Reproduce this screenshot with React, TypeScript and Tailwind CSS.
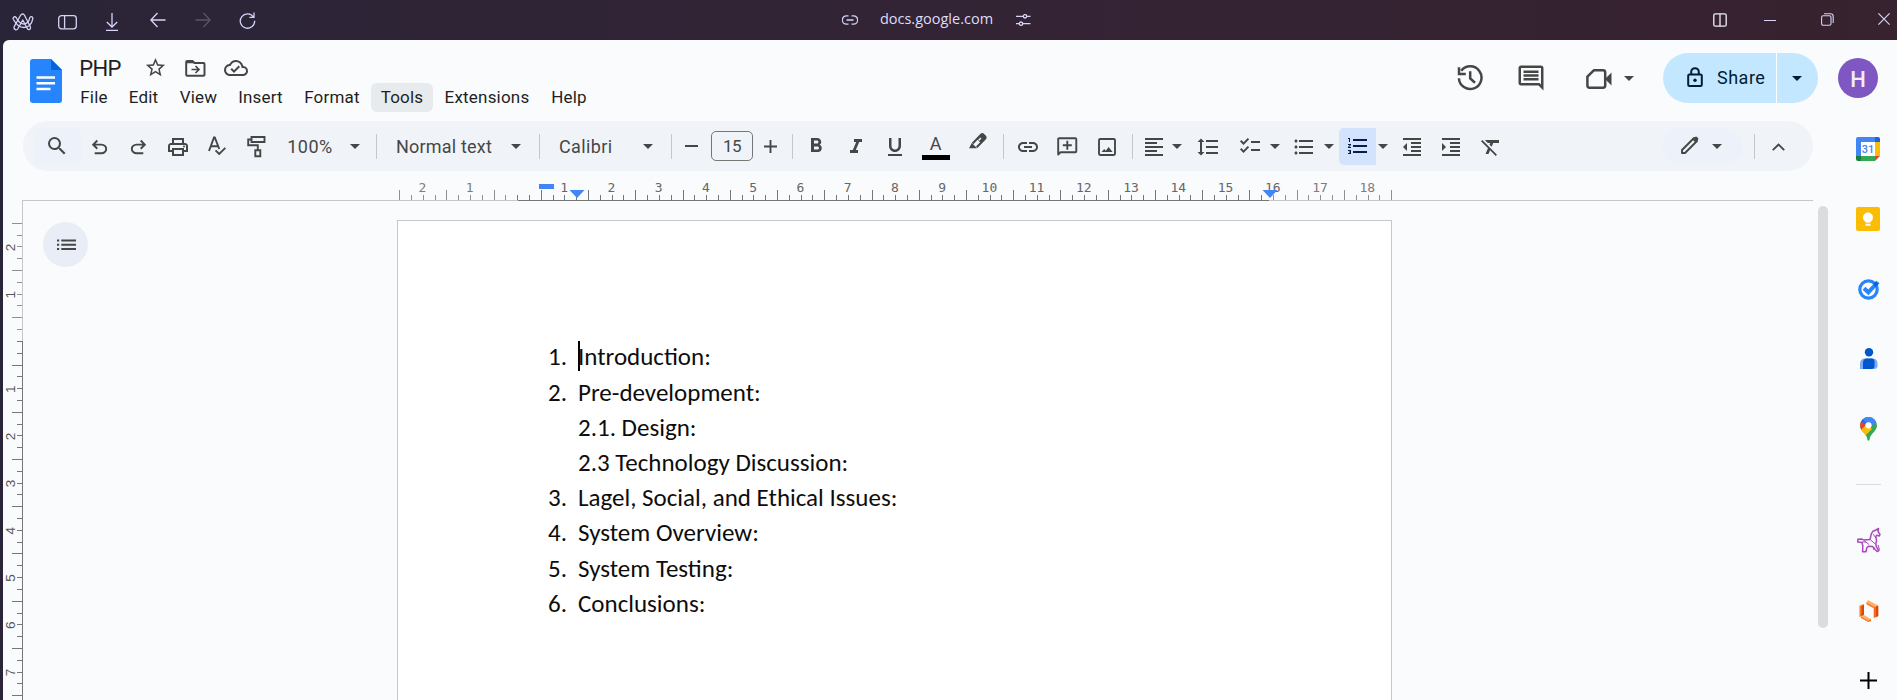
import type { ReactNode } from "react";
import {
  MdArrowDropDown,
  MdChecklist,
  MdFormatAlignLeft,
  MdFormatBold,
  MdFormatClear,
  MdFormatIndentDecrease,
  MdFormatIndentIncrease,
  MdFormatItalic,
  MdFormatLineSpacing,
  MdFormatListBulleted,
  MdFormatListNumbered,
  MdFormatUnderlined,
  MdLink,
  MdOutlineCloudDone,
  MdOutlineComment,
  MdOutlinePrint,
  MdSearch,
  MdStarBorder,
} from "react-icons/md";

function Slot({ className, children }: { className: string; children?: ReactNode }) {
  return <div className={`flex shrink-0 items-center justify-center [&>svg]:shrink-0 ${className}`}>{children}</div>;
}

const Caret = ({ className }: { className: string }) => (
  <Slot className={className}>
    <MdArrowDropDown size={24} />
  </Slot>
);

const Divider = ({ className }: { className: string }) => (
  <Slot className={className}>
    <div className="h-[25px] w-px bg-[#c7c7c7]" />
  </Slot>
);

/* ---------- browser chrome ---------- */

function TitleBar() {
  return (
    <div className="flex h-10 shrink-0 items-center bg-linear-to-r from-[#2a2438] via-[#332435] to-[#37222f] text-[#d6d3f5]">
      <Slot className="ml-[3px] w-10 pt-[3px]">
        <svg width="22" height="18" viewBox="0 0 22 18" fill="none" stroke="currentColor" strokeWidth="1.3" strokeLinejoin="round" strokeLinecap="round">
          <path d="M2.2 13.6 8.6 2.2Q9.3 1 10.6 1t1.9 1.2l5.8 11.600q.6 1.400-.4 2.400-1.500 1-2.500-.5L10.800 7 5.700 16q-.9 1.300-2.300.6-1.900-1-1.200-3Z" />
          <path d="M1.300 6.200q-.7-1.800 1-2.400 1.300-.3 2 1Q7.200 11 12 11q4.600-.6 5.700-6.200.5-1.400 1.900-1.200 1.500.5 1.200 2.200-1.600 8-8.800 8.700Q5.500 14.300 1.300 6.200Z" />
        </svg>
      </Slot>
      <Slot className="w-[49px] pt-1">
        <svg width="19" height="15" viewBox="0 0 19 15" fill="none" stroke="currentColor" strokeWidth="1.3">
          <rect x=".7" y=".7" width="17.600" height="13.100" rx="2.800" />
          <path d="M6.600 1v12.500" />
        </svg>
      </Slot>
      <Slot className="w-10 pt-1">
        <svg width="14" height="18" viewBox="0 0 14 18" fill="none" stroke="currentColor" strokeWidth="1.3">
          <path d="M7 0v13.800M1.800 9 7 14l5.200-5M1 17.400h12" />
        </svg>
      </Slot>
      <Slot className="w-[51px]">
        <svg width="16" height="16" viewBox="0 0 16 16" fill="none" stroke="currentColor" strokeWidth="1.3">
          <path d="M15.500 8H1M7.500 1 .9 8l6.600 7" />
        </svg>
      </Slot>
      <Slot className="w-[39px] text-[#5b5468]">
        <svg width="16" height="16" viewBox="0 0 16 16" fill="none" stroke="currentColor" strokeWidth="1.3">
          <path d="M.5 8H15M8.500 1l6.600 7-6.600 7" />
        </svg>
      </Slot>
      <Slot className="w-[51px] pt-px">
        <svg width="17" height="17" viewBox="0 0 17 17" fill="none" stroke="currentColor" strokeWidth="1.3">
          <path d="M14.600 5.200A7.200 7.200 0 1 0 15.700 8.800M15 .6v4.800h-4.600" />
        </svg>
      </Slot>
      <Slot className="ml-[559px] w-[35px]">
        <svg width="16" height="10" viewBox="0 0 16 10" fill="none" stroke="currentColor" strokeWidth="1.3">
          <path d="M6.500.8h-2a4.200 4.200 0 0 0 0 8.400h2M9.500.8h2a4.200 4.200 0 0 1 0 8.400h-2M4.500 5h7" />
        </svg>
      </Slot>
      <Slot className="w-[138px] pb-0.5 pl-px font-['Open_Sans',sans-serif] text-[14.500px] whitespace-nowrap text-[#dedcf8]">docs.google.com</Slot>
      <Slot className="w-9">
        <svg width="15" height="12" viewBox="0 0 15 12" fill="none" stroke="currentColor" strokeWidth="1.3">
          <path d="M0 2.300h7M11 2.300h3.500M0 9.700h3M7 9.700h7.500" />
          <circle cx="9" cy="2.300" r="1.700" />
          <circle cx="5" cy="9.700" r="1.700" />
        </svg>
      </Slot>
      <Slot className="ml-[659px] w-10 text-[#f2f0fa]">
        <svg width="14" height="14" viewBox="0 0 14 14" fill="none" stroke="currentColor" strokeWidth="1.3">
          <rect x=".8" y=".8" width="12.400" height="12.400" rx="1.500" />
          <path d="M7 1v12" />
        </svg>
      </Slot>
      <Slot className="w-[60px]">
        <div className="h-px w-3 bg-[#d6d3f5]" />
      </Slot>
      <Slot className="w-[54px] pb-0.5">
        <svg width="13" height="13" viewBox="0 0 13 13" fill="none" stroke="currentColor" strokeWidth="1.1">
          <rect x=".6" y="2.800" width="9.400" height="9.400" rx="1.500" />
          <path d="M3 .7h6.500q2.700 0 2.700 2.700V10" />
        </svg>
      </Slot>
      <Slot className="w-[43px] pb-0.5 pl-[17px]">
        <svg width="12" height="12" viewBox="0 0 12 12" fill="none" stroke="currentColor" strokeWidth="1.2">
          <path d="m.4.4 11.200 11.200M11.600.4.4 11.600" />
        </svg>
      </Slot>
    </div>
  );
}

/* ---------- document header ---------- */

const menuItems = [
  { label: "File", className: "w-12" },
  { label: "Edit", className: "w-[51px]" },
  { label: "View", className: "w-[59px]" },
  { label: "Insert", className: "w-[65px]" },
  { label: "Format", className: "w-[78px]" },
  { label: "Tools", className: "w-[62px] rounded-md bg-[#e7ebee]" },
  { label: "Extensions", className: "w-[108px]" },
  { label: "Help", className: "w-14" },
];

function Header() {
  return (
    <div className="flex h-[81px] shrink-0 text-[#444746]">
      <div className="w-[67px] shrink-0 pt-[19px] pl-[27px]">
        <svg width="32" height="44" viewBox="0 0 32 44">
          <path d="M3 0h18l11 11v30a3 3 0 0 1-3 3H3a3 3 0 0 1-3-3V3a3 3 0 0 1 3-3Z" fill="#2684fc" />
          <path d="M21 0l11 11H21Z" fill="#0066da" />
          <path d="M6.500 18.500h18.500M6.500 24.300h18.500M6.500 30h14" stroke="#fff" strokeWidth="2.400" />
        </svg>
      </div>
      <div className="flex w-[560px] shrink-0 flex-col">
        <div className="flex h-[43px] items-center pt-[14px]">
          <Slot className="w-[60px] font-['Roboto',sans-serif] text-[22px] tracking-[-0.600px] text-[#1f1f1f]">PHP</Slot>
          <Slot className="w-[50px] pb-[2px]"><MdStarBorder size={23} /></Slot>
          <Slot className="w-[31px] pb-px">
            <svg width="21" height="17" viewBox="0 0 21 17">
              <path d="M1.200 3V2q0-1 1-1h5.300l2 2h9q1 0 1 1v10.800q0 1-1 1H2.200q-1 0-1-1Z" fill="none" stroke="currentColor" strokeWidth="2" />
              <path d="M1 1h6.700l2 2.200H1Z" fill="currentColor" />
              <path d="M6.500 9.500h7M10.500 6l3.500 3.500-3.500 3.500" fill="none" stroke="currentColor" strokeWidth="1.700" />
            </svg>
          </Slot>
          <Slot className="w-[50px] pb-px"><MdOutlineCloudDone size={24} /></Slot>
        </div>
        <div className="flex font-['Roboto',sans-serif] text-[17px] text-[#1f1f1f]">
          {menuItems.map((m) => (
            <Slot key={m.label} className={`h-[29px] tracking-[0.200px] ${m.className}`}>{m.label}</Slot>
          ))}
        </div>
      </div>
      <div className="ml-auto flex h-[76px] items-center">
        <Slot className="w-6">
          <svg width="26" height="26" viewBox="0 0 26 26" fill="none" stroke="currentColor" strokeWidth="2.500">
            <path d="M1.900 13.200a11.300 11.300 0 1 0 2.300-7.400" />
            <path d="M2 2.200v6.700h6.800M13.200 6.200v7.200l4.800 4.300" />
          </svg>
        </Slot>
        <Slot className="w-[98px]"><MdOutlineComment size={30} /></Slot>
        <Slot className="w-[37px] pt-px">
          <svg width="26" height="22" viewBox="0 0 26 22">
            <path d="M7.800 2.300H17q2.200 0 2.200 2.200v13q0 2.200-2.200 2.200H3.600q-2.200 0-2.200-2.200V8.700Z" fill="none" stroke="currentColor" strokeWidth="2.500" strokeLinejoin="round" />
            <path d="m19 11 6.500-6.500v13Z" fill="currentColor" />
          </svg>
        </Slot>
        <Caret className="w-6" />
        <div className="ml-[22px] flex h-[50px] w-[155px] items-center rounded-full bg-[#c2e7ff] text-[#001d35]">
          <div className="flex h-full w-[113px] items-center pb-[2px] pl-6">
            <svg width="16" height="20" viewBox="0 0 16 20" fill="none" stroke="currentColor" strokeWidth="2">
              <rect x="1.200" y="7.500" width="13.600" height="11.400" rx="1.200" />
              <path d="M4.200 7.300V5a3.800 3.800 0 0 1 7.600 0v2.300" />
              <circle cx="8" cy="13.200" r="1.700" fill="currentColor" stroke="none" />
            </svg>
            <span className="pl-[14px] font-['Roboto',sans-serif] text-[18px] tracking-[0.500px]">Share</span>
          </div>
          <div className="h-full w-px bg-white" />
          <Caret className="w-10" />
        </div>
        <div className="mr-[19px] ml-5 flex size-10 items-center justify-center rounded-full bg-[#7e57c2] pt-[2px] font-['Roboto',sans-serif] text-[22px] font-medium text-white/90">H</div>
      </div>
    </div>
  );
}

/* ---------- toolbar ---------- */

const Undo = ({ className }: { className?: string }) => (
  <svg className={className} width="23" height="23" viewBox="0 -960 960 960" fill="currentColor">
    <path d="M280-200v-80h284q63 0 109.500-40T720-420q0-60-46.500-100T564-560H312l104 104-56 56-200-200 200-200 56 56-104 104h252q97 0 169.500 63T800-420q0 94-72.500 157T564-200H280Z" />
  </svg>
);

function Toolbar() {
  return (
    <div className="ml-5 flex h-[50px] w-[1790px] shrink-0 items-center rounded-full bg-[#f0f4f9] font-['Roboto',sans-serif] text-[18px] text-[#444746]">
      <Slot className="ml-3 h-[35px] w-[46px] bg-[#edf1fa] pr-[3px]"><MdSearch size={24} /></Slot>
      <Slot className="w-[38px] pt-[3px] pr-[2px]"><Undo /></Slot>
      <Slot className="w-[38px] pt-[3px]"><Undo className="-scale-x-100" /></Slot>
      <Slot className="w-[42px] pt-px"><MdOutlinePrint size={24} /></Slot>
      <Slot className="w-9">
        <svg width="18" height="20" viewBox="0 0 18 20" fill="none" stroke="currentColor" strokeWidth="1.900">
          <path d="M1 15 6 1.500h.8L11.300 13M2.800 10.300h7.400M7.500 14.300l3.700 3.700 6.200-6.200" />
        </svg>
      </Slot>
      <Slot className="w-[42px] pt-px">
        <svg width="19" height="22" viewBox="0 0 19 22" fill="none" stroke="currentColor" strokeWidth="1.900">
          <path d="M4.500 1h13v5h-13ZM4.500 3.500H1.200v5.700h9.600V14M8.300 14.200h5v6h-5Z" />
        </svg>
      </Slot>
      <Slot className="w-[66px] pt-px tracking-[0.500px]">100%</Slot>
      <Caret className="w-6" />
      <Divider className="w-[18px]" />
      <Slot className="w-[122px] !justify-start pl-[11px] tracking-[0.200px]">Normal text</Slot>
      <Caret className="w-[18px]" />
      <Divider className="w-7" />
      <Slot className="w-[82px] !justify-start pl-[6px] tracking-[0.400px]">Calibri</Slot>
      <Caret className="w-[26px]" />
      <Divider className="w-5" />
      <Slot className="w-5"><div className="h-[2px] w-[13px] bg-[#444746]" /></Slot>
      <Slot className="ml-[10px] h-[30px] w-[42px] rounded-[5px] border border-[#747775] pt-px text-[17px] tracking-[-0.500px]">15</Slot>
      <Slot className="w-[35px]">
        <svg width="13" height="13" viewBox="0 0 13 13" stroke="currentColor" strokeWidth="1.900"><path d="M6.500 0v13M0 6.500h13" /></svg>
      </Slot>
      <Divider className="w-2" />
      <Slot className="w-10"><MdFormatBold size={24} /></Slot>
      <Slot className="w-10 pt-px"><MdFormatItalic size={24} /></Slot>
      <Slot className="w-[39px] pt-px pr-px"><MdFormatUnderlined size={24} /></Slot>
      <Slot className="h-[38px] w-[41px] flex-col pb-px">
        <span className="h-[23px] text-[18px] leading-[23px]">A</span>
        <div className="h-[5px] w-7 bg-black" />
      </Slot>
      <Slot className="w-11 pb-[10px]">
        <svg width="18" height="17" viewBox="0 0 18 17">
          <path d="M3.600 10.500 12 1.700q1.300-1.200 2.500 0l1.500 1.500q1.200 1.200 0 2.500L7.700 14.200" fill="none" stroke="currentColor" strokeWidth="2" />
          <path d="M7.500 5.500 12 1.300q1.500-1 2.800.2l1.500 1.400q1.200 1.400 0 2.800l-4.300 4.500ZM2.800 10l5.300 5.200H0Z" fill="currentColor" />
          <path d="m9.700 7.300 2.200-2.200" stroke="#f0f4f9" strokeWidth="1.500" />
        </svg>
      </Slot>
      <Divider className="w-[7px]" />
      <Slot className="w-[41px] pt-px"><MdLink size={24} /></Slot>
      <Slot className="w-[38px] pt-px">
        <svg width="21" height="20" viewBox="0 0 21 20" fill="none" stroke="currentColor" strokeWidth="1.900">
          <path d="M1.200 17.500V2.200q0-1 1-1h16.100q1 0 1 1v12.100q0 1-1 1H3.500Z" strokeLinejoin="round" />
          <path d="M10.300 3.800v8.900M5.800 8.200h9" />
        </svg>
      </Slot>
      <Slot className="w-[41px] pt-px">
        <svg width="18" height="18" viewBox="0 0 18 18">
          <rect x="1" y="1" width="16" height="16" rx="1.200" fill="none" stroke="currentColor" strokeWidth="1.900" />
          <path d="m3.600 14 2.600-3 1.600 1.800L10.600 9l4 5Z" fill="currentColor" />
        </svg>
      </Slot>
      <Divider className="w-[11px]" />
      <Slot className="w-8 pt-px"><MdFormatAlignLeft size={24} /></Slot>
      <Caret className="w-[14px]" />
      <Slot className="w-12 pt-px"><MdFormatLineSpacing size={24} /></Slot>
      <Slot className="w-[35px]"><MdChecklist size={24} /></Slot>
      <Caret className="w-4" />
      <Slot className="w-[41px] pt-px"><MdFormatListBulleted size={24} /></Slot>
      <Caret className="w-[10px]" />
      <Slot className="ml-[5px] h-[37px] w-[37px] rounded-l-[5px] bg-[#d3e3fd] text-[#041e49]"><MdFormatListNumbered size={24} /></Slot>
      <Caret className="w-[14px]" />
      <Slot className="w-[43px] pt-px"><MdFormatIndentDecrease size={24} /></Slot>
      <Slot className="w-9 pt-px"><MdFormatIndentIncrease size={24} /></Slot>
      <Slot className="w-[43px] pt-px"><MdFormatClear size={24} /></Slot>
      <div className="ml-[150px] flex h-[37px] w-[81px] items-center rounded-full bg-[#edf1fa]">
        <Slot className="ml-3 w-8 pb-[3px]">
          <svg width="18" height="18" viewBox="0 0 18 18">
            <path d="M1 17v-3L13 2l3 3L4 17Z" fill="none" stroke="currentColor" strokeWidth="1.900" strokeLinejoin="round" />
            <path d="M11.500 3.500 14 1q1-.8 2 0l1 1q.8 1 0 2l-2.500 2.500Z" fill="currentColor" />
          </svg>
        </Slot>
        <Caret className="w-[22px]" />
      </div>
      <Divider className="w-[23px]" />
      <Slot className="w-[25px] pt-px">
        <svg width="13" height="8" viewBox="0 0 13 8" fill="none" stroke="currentColor" strokeWidth="1.900"><path d="m.8 7.200 5.700-5.700 5.700 5.700" /></svg>
      </Slot>
    </div>
  );
}

/* ---------- rulers ---------- */

const CM = 47.24;
const tickAt = (zero: number, quarter: number) => Math.floor(zero + (quarter * CM) / 4) + 0.5;
const range = (from: number, to: number) => Array.from({ length: to - from + 1 }, (_, i) => from + i);

function HorizontalRuler() {
  const zero = 517.7 - 22;
  return (
    <svg className="block" width="1791" height="30" viewBox="0 0 1791 30">
      <path d="M0 29.500h1791" stroke="#c7c7c7" />
      <path d="M496 29.500h751" stroke="#747775" />
      {range(-10, 74).map((q) => {
        const x = tickAt(zero, q);
        const tall = Math.abs(q) % 4 === 2;
        return <path key={q} d={`M${x} ${tall ? 19 : 24}v${tall ? 10 : 5}`} stroke={q < 0 || q > 63 ? "#8f9191" : "#747775"} />;
      })}
      {range(-2, 18).filter((n) => n !== 0).map((n) => (
        <text key={n} x={zero + n * CM - 0.7} y="21" textAnchor="middle" className="font-['DejaVu_Sans_Mono',monospace] text-[13px]" fill={n < 0 || n > 16 ? "#7d7d7d" : "#666"}>
          {Math.abs(n)}
        </text>
      ))}
      <path d="M517 13h15v5h-15ZM547.500 19h15l-7.500 8Z" fill="#4285f4" />
      <path d="M1240.500 19h15l-7.500 8Z" fill="#4285f4" />
    </svg>
  );
}

function VerticalRuler() {
  const zero = 340.4 - 200;
  return (
    <svg className="block shrink-0" width="20" height="500" viewBox="0 0 20 500">
      <path d="M19.500 0v500" stroke="#c7c7c7" />
      <path d="M19.500 140v360" stroke="#747775" />
      {range(-10, 30).map((q) => {
        const y = tickAt(zero, q);
        const tall = Math.abs(q) % 4 === 2;
        return <path key={q} d={`M${tall ? 9 : 14} ${y}h${tall ? 10 : 5}`} stroke={q < 0 ? "#8f9191" : "#747775"} />;
      })}
      {range(-2, 7).filter((n) => n !== 0).map((n) => (
        <text key={n} transform={`translate(12 ${zero + n * CM + 0.5}) rotate(-90)`} textAnchor="middle" className="font-['Liberation_Sans',sans-serif] text-[13.500px]" fill="#555">
          {Math.abs(n)}
        </text>
      ))}
    </svg>
  );
}

/* ---------- document ---------- */

const lines = [
  { no: "1.", text: "Introduction:" },
  { no: "2.", text: "Pre-development:" },
  { no: "", text: "2.1. Design:" },
  { no: "", text: "2.3 Technology Discussion:" },
  { no: "3.", text: "Lagel, Social, and Ethical Issues:" },
  { no: "4.", text: "System Overview:" },
  { no: "5.", text: "System Testing:" },
  { no: "6.", text: "Conclusions:" },
];

function Page() {
  return (
    <div className="ml-[309px] h-[480px] w-[995px] shrink-0 border border-b-0 border-[#c7c7c7] bg-white pt-[118.600px] pl-[150px] font-['Carlito','Lato',sans-serif] text-[25px] text-[#0d0d0d]">
      {lines.map((l, i) => (
        <div key={l.text} className="flex h-[35.200px] items-center whitespace-nowrap">
          <span className="w-[30px]">{l.no}</span>
          <span className="relative">
            {i === 0 && <span className="absolute top-[3px] left-0 h-[30px] w-[2px] bg-black" />}
            {l.text}
          </span>
        </div>
      ))}
    </div>
  );
}

/* ---------- side panel ---------- */

function SidePanel() {
  return (
    <div className="flex w-[57px] shrink-0 flex-col items-center pr-px">
      <Slot className="h-[55px]">
        <svg width="24" height="24" viewBox="0 0 24 24">
          <path d="M2 0h17v5H5v14H0V2Q0 0 2 0Z" fill="#4285f4" />
          <path d="M19 0h3q2 0 2 2v3h-5Z" fill="#1967d2" />
          <path d="M19 5h5v14h-5Z" fill="#fbbc04" />
          <path d="M0 19h5v5H2q-2 0-2-2Z" fill="#188038" />
          <path d="M5 19h14v5H5Z" fill="#34a853" />
          <path d="M19 19h5l-5 5Z" fill="#ea4335" />
          <path d="M5 5h14v14H5Z" fill="#fff" />
          <text x="12" y="16.200" textAnchor="middle" className="font-['Roboto',sans-serif] text-[11px] font-medium" fill="#4285f4">31</text>
        </svg>
      </Slot>
      <Slot className="mt-[15px] h-[55px]">
        <svg width="24" height="24" viewBox="0 0 24 24">
          <rect width="24" height="24" rx="2" fill="#fbbc04" />
          <circle cx="12" cy="10.500" r="5" fill="#fff" />
          <path d="M9.500 13h5v2.500h-5ZM9.500 16.800h5v2h-5Z" fill="#fff" />
        </svg>
      </Slot>
      <Slot className="mt-[15px] h-[55px] pl-px">
        <svg width="22" height="22" viewBox="0 0 22 22" fill="none">
          <circle cx="10.500" cy="11.500" r="8.700" stroke="#2684fc" strokeWidth="3.200" />
          <path d="m6 10.200 4.300 4.100L20 4" stroke="#2684fc" strokeWidth="4" />
          <path d="m15.200 6 2.300-2.500 3 2.500-3 3Z" fill="#0066da" />
        </svg>
      </Slot>
      <Slot className="mt-[15px] h-[55px] pl-px">
        <svg width="18" height="22" viewBox="0 0 18 22">
          <circle cx="9" cy="4.200" r="4.200" fill="#0057cc" />
          <path d="M0 21v-5q0-5.500 5-5.500h7q5.500 0 5.500 5v2q0 3.500-3.500 3.500Z" fill="#7baaf7" />
          <path d="M3 21v-6q0-4.500 4-4.500h4.500q3 0 3 3V18q0 3-3 3Z" fill="#0057cc" />
        </svg>
      </Slot>
      <Slot className="mt-[15px] h-[55px] pl-px">
        <svg width="17" height="24" viewBox="0 0 17 24">
          <clipPath id="pin"><path d="M8.500 0a8.500 8.500 0 0 1 8.500 8.500c0 6-7 7.500-7.500 14.500q-1 1.500-2 0C7 16 0 14.500 0 8.500A8.500 8.500 0 0 1 8.500 0Z" /></clipPath>
          <g clipPath="url(#pin)">
            <path d="M0 0h17v24H0Z" fill="#34a853" />
            <path d="M0 0h17v5L8 13 0 5Z" fill="#4285f4" />
            <path d="m0 2 2-1 6 7-2 3Z" fill="#1a73e8" />
            <path d="M0 3.500 6 8l-5 7H0Z" fill="#ea4335" />
            <path d="m0 14 7-7 5 5-8 8Z" fill="#fbbc04" />
          </g>
          <circle cx="8.500" cy="8.300" r="3.100" fill="#fff" />
        </svg>
      </Slot>
      <div className="mt-[28px] h-px w-[25px] shrink-0 bg-[#dadce0]" />
      <Slot className="mt-[27px] h-[55px] pl-px">
        <svg width="24" height="26" viewBox="0 0 24 26" fill="none" stroke="#ab47bc" strokeWidth="1.500" strokeLinejoin="round">
          <path d="M21.500 1.500 19 3l-3 1.200-1.700 2.600L13 12.500l-6.500.5-1.500-1-4.200.3v2.700l4.200.5.8 3.500-.2 5.700H9l.8-4 1.700-1.500 4 .3 1.500 1.800 3.200 3.200 1.700-1-2.500-3.600-.6-3 .8-3-.8-4.300.8-1.300 2.700.7.7-1.500-2-3Z" />
          <path d="M5 15h4M17 20l-.3 3M21 18l1.500 4.500M16 7l3 4M13.500 13l5 4M7 13.500l5 4" strokeWidth="1" />
        </svg>
      </Slot>
      <Slot className="mt-[16px] h-[55px] pl-px">
        <svg width="20" height="22" viewBox="0 0 20 22">
          <path d="M.5 5.500 5 4.500V15L.5 17Z" fill="#f47b20" />
          <path d="M2.500 5v11.500L5 15V4.500Z" fill="#d9480f" />
          <path d="m.5 5.500 2-1.300 2.500.3-2.500 1.200Z" fill="#ffc38a" />
          <path d="M2 16.500 5 15l7 4-3 1.500Z" fill="#ffb26b" />
          <path d="m2 16.500 7 4 3-1.500v2L9.500 22 2 18Z" fill="#f96b13" />
          <path d="m7.500 1.500 2-1.200 9.700 5.200-4.500 2-7.200-4Z" fill="#ffb26b" />
          <path d="m7.500 2.500 7.200 4v1.800l-7.200-4Z" fill="#f47b20" />
          <path d="m14.700 7.300 4.500-1.800V16l-4.500 2Z" fill="#f96b13" />
          <path d="M17 6.500v10.700l2.200-1.200V5.500Z" fill="#d9480f" />
        </svg>
      </Slot>
      <Slot className="mt-[15px] h-[55px] pl-px">
        <svg width="17" height="17" viewBox="0 0 17 17" stroke="#000" strokeWidth="2"><path d="M8.500 0v17M0 8.500h17" /></svg>
      </Slot>
    </div>
  );
}

export default function App() {
  return (
    <div className="flex h-[700px] w-[1897px] flex-col overflow-hidden bg-[#2a2438]">
      <TitleBar />
      <div className="ml-[3px] flex h-[660px] w-[1894px] flex-col overflow-hidden rounded-tl-md bg-[#f9fbfd]">
        <Header />
        <div className="flex h-[579px]">
          <div className="flex w-[1837px] shrink-0 flex-col">
            <Toolbar />
            <div className="ml-[19px] h-[30px]">
              <HorizontalRuler />
            </div>
            <div className="flex h-[499px]">
              <VerticalRuler />
              <div className="mt-[21px] ml-5 flex size-[45px] shrink-0 items-center justify-center rounded-full bg-[#e9eef6] pl-px">
                <svg width="19" height="12" viewBox="0 0 19 12" stroke="#444746" strokeWidth="2">
                  <path d="M0 1.500h2.200M4.300 1.500H19M0 5.700h2.200M4.300 5.700H19M0 9.900h2.200M4.300 9.900H19" />
                </svg>
              </div>
              <div className="mt-[19px] flex">
                <Page />
              </div>
              <div className="mt-[5px] ml-[426px] h-[422px] w-[10px] rounded-full bg-[#dadce0]" />
            </div>
          </div>
          <SidePanel />
        </div>
      </div>
    </div>
  );
}
